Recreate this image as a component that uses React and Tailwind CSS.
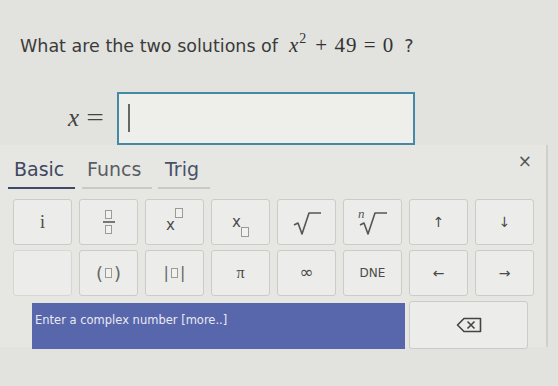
import React from 'react'

const serif = { fontFamily: '"Liberation Serif", "DejaVu Serif", serif' }

function Box({ className = '' }) {
  return <span className={`inline-block border border-[#9a9b98] bg-[#f1f2ee] ${className}`} />
}

function Key({ children, className = '' }) {
  return (
    <div
      className={`flex items-center justify-center rounded-[3px] border border-[#cbccc8] bg-[#ecedea] text-[#4a4a4a] ${className}`}
    >
      {children}
    </div>
  )
}

function SqrtIcon({ n }) {
  return (
    <svg width="34" height="30" viewBox="0 0 34 30" fill="none">
      {n && (
        <text x="2" y="11" fontSize="13" fontStyle="italic" fill="#555" style={serif}>
          n
        </text>
      )}
      <path d="M4 18 L8 16 L12 27 L19 6 L31 6" stroke="#555" strokeWidth="1.6" strokeLinejoin="round" />
    </svg>
  )
}

function BackspaceIcon() {
  return (
    <svg width="26" height="16" viewBox="0 0 26 16" fill="none">
      <path d="M8 1.5 L24.5 1.5 L24.5 14.5 L8 14.5 L1.5 8 Z" stroke="#444" strokeWidth="1.6" strokeLinejoin="round" />
      <path d="M11.5 4.5 L18.5 11.5 M18.5 4.5 L11.5 11.5" stroke="#444" strokeWidth="1.6" />
    </svg>
  )
}

export default function App() {
  return (
    <div
      className="relative w-[558px] h-[386px] overflow-hidden bg-[#e2e3df]"
      style={{ fontFamily: '"DejaVu Sans", Verdana, sans-serif' }}
    >
      {/* Question */}
      <div className="pt-[30px] pl-[20px] text-[17.5px] text-[#3b3b3b] flex items-baseline">
        <span>What are the two solutions of</span>
        <span className="ml-[11px] text-[21px] text-[#333]" style={serif}>
          <i>x</i>
          <span className="relative -top-[9px] ml-[1px] text-[14px]">2</span>
          <span className="ml-[9px] tracking-[1px]">+ 49 = 0</span>
        </span>
        <span className="ml-[10px]">?</span>
      </div>

      {/* Answer input */}
      <div className="mt-[30px] flex items-center pl-[68px]">
        <span className="text-[25px] text-[#444]" style={serif}>
          <i>x</i>
          <span className="ml-[9px] inline-block scale-x-125">=</span>
        </span>
        <div className="ml-[15px] flex h-[53px] w-[298px] items-center border-2 border-[#4489a6] bg-[#eeefeb] pl-[9px]">
          <span className="block h-[28px] w-[1.5px] bg-[#666]" />
        </div>
      </div>

      {/* Keypad */}
      <div className="h-[202px] w-[548px] border-r-2 border-[#cfd0cc] bg-[#e6e7e3]">
        <div className="flex items-start justify-between pr-[14px]">
          <div className="flex pl-[8px] pt-[10px] text-[19px]">
            <div className="w-[67px] border-b-2 border-[#3f4a68] pb-[4px] pl-[6px] text-[#3f4760]">Basic</div>
            <div className="ml-[7px] w-[70px] border-b-2 border-[#c9cac6] pb-[4px] pl-[5px] text-[#5a5d63]">Funcs</div>
            <div className="ml-[6px] w-[52px] border-b-2 border-[#c9cac6] pb-[4px] pl-[7px] text-[#4b5068]">Trig</div>
          </div>
          <div className="pt-[4px] text-[17px] text-[#555]">×</div>
        </div>

        <div className="mt-[10px] grid grid-cols-[repeat(8,59px)] grid-rows-[46px_46px_48px] gap-x-[7px] gap-y-[5px] pl-[13px]">
          <Key>
            <span className="text-[18px]" style={serif}>i</span>
          </Key>
          <Key>
            <span className="flex flex-col items-center">
              <Box className="h-[9px] w-[7px]" />
              <span className="my-[2px] block h-[1.5px] w-[12px] bg-[#777]" />
              <Box className="h-[9px] w-[7px]" />
            </span>
          </Key>
          <Key>
            <span className="flex items-start pt-[6px]">
              <span className="text-[15px]">x</span>
              <Box className="-mt-[6px] h-[10px] w-[8px]" />
            </span>
          </Key>
          <Key>
            <span className="flex items-end">
              <span className="text-[15px]">x</span>
              <Box className="-mb-[4px] h-[10px] w-[8px]" />
            </span>
          </Key>
          <Key>
            <SqrtIcon />
          </Key>
          <Key>
            <SqrtIcon n />
          </Key>
          <Key className="bg-[#e2e3df] text-[14px]">↑</Key>
          <Key className="bg-[#e2e3df] text-[14px]">↓</Key>

          <Key className="border-[#d6d7d3] bg-[#e6e7e3]" />
          <Key>
            <span className="flex items-center text-[18px] text-[#666]">
              (<Box className="mx-[2px] h-[10px] w-[7px]" />)
            </span>
          </Key>
          <Key>
            <span className="flex items-center text-[16px] text-[#666]">
              |<Box className="mx-[2px] h-[10px] w-[7px]" />|
            </span>
          </Key>
          <Key>
            <span className="text-[16px]" style={serif}>π</span>
          </Key>
          <Key>
            <span className="text-[17px]">∞</span>
          </Key>
          <Key>
            <span className="text-[12px]">DNE</span>
          </Key>
          <Key className="bg-[#e2e3df] text-[14px]">←</Key>
          <Key className="bg-[#e2e3df] text-[14px]">→</Key>

          <div className="col-span-6 ml-[19px] -mr-[3px] mt-[2px] bg-[#5866ab] px-[3px] pt-[9px] text-[11.5px] text-[#e8eaf4]">
            Enter a complex number [more..]
          </div>
          <Key className="col-span-2 mr-[6px]">
            <BackspaceIcon />
          </Key>
        </div>
      </div>
    </div>
  )
}
